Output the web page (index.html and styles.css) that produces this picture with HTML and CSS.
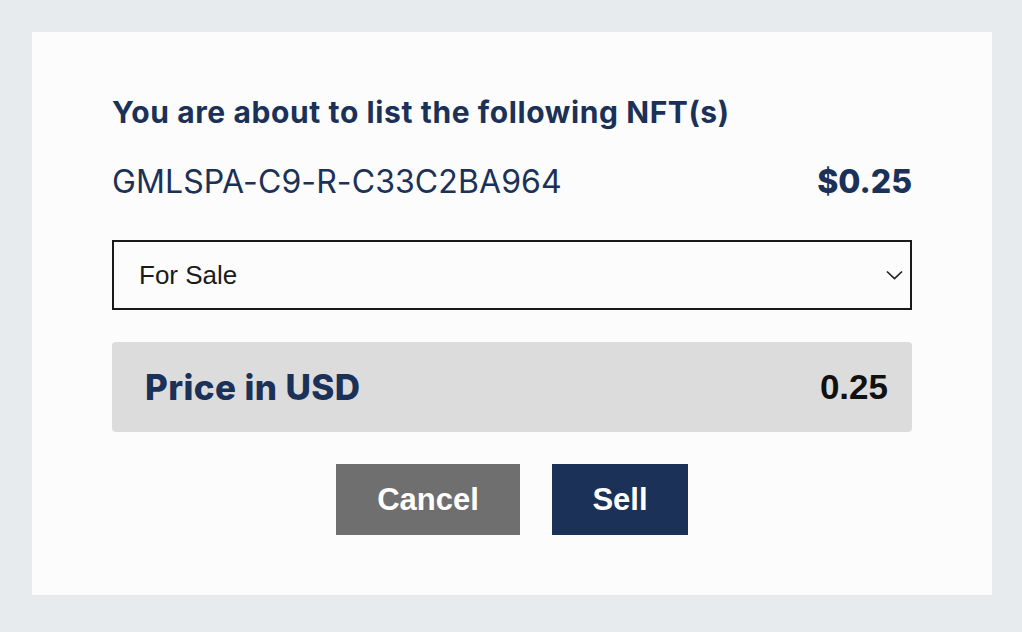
FILE: index.html
```html
<!DOCTYPE html>
<html lang="en">
<head>
    <meta charset="UTF-8">
    <meta name="viewport" content="width=device-width, initial-scale=1.0">
    <title>List NFT</title>
    <link rel="stylesheet" href="styles.css">
</head>
<body>
    <div class="modal">
        <h2 class="modal-title">You are about to list the following NFT(s)</h2>
        <div class="nft-row">
            <span class="nft-id">GMLSPA-C9-R-C33C2BA964</span>
            <span class="nft-price">$0.25</span>
        </div>
        <div class="select-box">
            <span>For Sale</span>
            <svg class="chevron" width="17" height="10" viewBox="0 0 17 10">
                <path d="M1 1.5 L8.5 8.5 L16 1.5" fill="none" stroke="#222" stroke-width="1.7"/>
            </svg>
        </div>
        <div class="price-box">
            <span class="price-label">Price in USD</span>
            <span class="price-value">0.25</span>
        </div>
        <div class="actions">
            <button class="btn btn-cancel">Cancel</button>
            <button class="btn btn-sell">Sell</button>
        </div>
    </div>
</body>
</html>
```

FILE: styles.css
```css
body {
    margin: 0;
    padding: 32px 30px 37px 32px;
    background-color: #e8ebee;
    font-family: "Liberation Sans", Arial, sans-serif;
}
.modal {
    background-color: #fcfcfc;
    padding: 56px 80px 60px 80px;
    height: 563px;
    box-sizing: border-box;
}
.modal-title {
    margin: 0;
    font-family: Inter, sans-serif;
    font-weight: 700;
    font-size: 30px;
    letter-spacing: 0.6px;
    color: #1b3157;
    line-height: 48px;
}
.nft-row {
    display: flex;
    justify-content: space-between;
    align-items: center;
    margin-top: 22px;
    line-height: 48px;
}
.nft-id {
    font-family: Inter, sans-serif;
    font-size: 32px;
    color: #1b3157;
    letter-spacing: 0.1px;
}
.nft-price {
    font-family: Inter, sans-serif;
    font-weight: 800;
    font-size: 32px;
    color: #1b3157;
}
.select-box {
    display: flex;
    justify-content: space-between;
    align-items: center;
    margin-top: 34px;
    height: 70px;
    box-sizing: border-box;
    border: 2px solid #1a1a1a;
    padding: 0 7px 0 25px;
    font-size: 26px;
    color: #1a1a1a;
}
.price-box {
    display: flex;
    justify-content: space-between;
    align-items: center;
    margin-top: 32px;
    height: 90px;
    padding: 0 24px 0 33px;
    background-color: #dcdcdc;
    border-radius: 4px;
}
.price-label {
    font-family: Inter, sans-serif;
    font-weight: 800;
    font-size: 35px;
    letter-spacing: 0.4px;
    color: #1b3157;
}
.price-value {
    font-weight: 700;
    font-size: 35px;
    color: #111;
}
.actions {
    display: flex;
    justify-content: center;
    gap: 32px;
    margin-top: 32px;
}
.btn {
    border: none;
    color: white;
    font-family: "Liberation Sans", Arial, sans-serif;
    font-weight: 700;
    font-size: 31px;
    height: 71px;
    cursor: pointer;
}
.btn-cancel {
    width: 184px;
    background-color: #6f6f6f;
}
.btn-sell {
    width: 136px;
    background-color: #1b3157;
}
```
